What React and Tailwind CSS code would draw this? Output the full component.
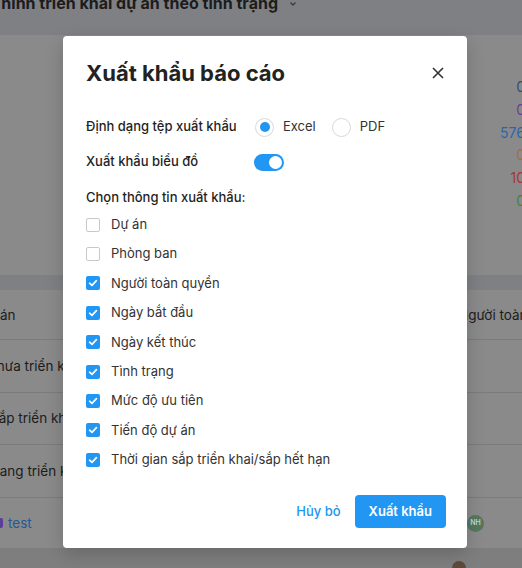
import React, { useState } from 'react'

const fields = [
    { label: 'Dự án', checked: false },
    { label: 'Phòng ban', checked: false },
    { label: 'Người toàn quyền', checked: true },
    { label: 'Ngày bắt đầu', checked: true },
    { label: 'Ngày kết thúc', checked: true },
    { label: 'Tình trạng', checked: true },
    { label: 'Mức độ ưu tiên', checked: true },
    { label: 'Tiến độ dự án', checked: true },
    { label: 'Thời gian sắp triển khai/sắp hết hạn', checked: true },
]

const Checkbox = ({ checked, onClick }) => (
    <button
        type="button"
        onClick={onClick}
        className={checked
            ? 'w-[14px] h-[14px] rounded-[2px] bg-[#2196f3] flex items-center justify-center shrink-0'
            : 'w-[14px] h-[14px] rounded-[2px] bg-white border border-[#c9c9c9] shrink-0'}
    >
        {checked && (
            <svg width="10" height="10" viewBox="0 0 10 10" fill="none">
                <path d="M1.6 5.2L4 7.4L8.4 2.6" stroke="white" strokeWidth="1.7" strokeLinecap="round" strokeLinejoin="round" />
            </svg>
        )}
    </button>
)

const Radio = ({ checked, label, onClick }) => (
    <button type="button" onClick={onClick} className="flex items-center gap-[9px]">
        <span className="w-[19px] h-[19px] rounded-full border border-[#d9d9d9] bg-white flex items-center justify-center">
            {checked && <span className="w-[10px] h-[10px] rounded-full bg-[#2196f3]" />}
        </span>
        <span className="text-[13px] text-[#333]">{label}</span>
    </button>
)

const App = () => {
    const [format, setFormat] = useState('Excel')
    const [chart, setChart] = useState(true)
    const [checks, setChecks] = useState(fields.map(f => f.checked))

    return (
        <div className="relative w-[522px] h-[568px] overflow-hidden bg-[#7f8084] font-['Inter',sans-serif]">
            {/* Dimmed page behind the modal */}
            <div className="flex flex-col">
                <div className="h-[35px] flex items-start">
                    <div className="w-[278px] flex justify-end whitespace-nowrap">
                        <span className="text-[16px] font-bold text-[#1c1c1c] leading-[20px] -mt-[7px]">Tình hình triển khai dự án theo tình trạng</span>
                    </div>
                    <svg className="ml-[10px] -mt-[1px]" width="10" height="10" viewBox="0 0 10 10" fill="none">
                        <path d="M2.5 3.5L5 6L7.5 3.5" stroke="#3a3a3a" strokeWidth="1.3" />
                    </svg>
                </div>

                <div className="h-[240px] bg-[#8a8a8a] flex justify-end pt-[41px] -mr-[3px]">
                    <div className="flex flex-col items-end text-[14px] leading-[22.8px]">
                        <span className="text-[#2f4f80]">0</span>
                        <span className="text-[#6b3f96]">0</span>
                        <span className="text-[#2a66b0]">576</span>
                        <span className="text-[#a0703f]">0</span>
                        <span className="text-[#a23838]">10</span>
                        <span className="text-[#3c873c]">0</span>
                    </div>
                </div>

                <div className="h-[15px]" />

                <div className="bg-[#8a8a8a] text-[13.5px] text-[#1c1c1c]">
                    <div className="h-[49px] flex items-center pt-[1px] whitespace-nowrap">
                        <span className="-ml-[22px]">Dự án</span>
                        <span className="ml-auto w-[64px]">Người toàn quyền</span>
                    </div>
                    <div className="h-[53px] border-t border-[#7b7b7b] flex items-center whitespace-nowrap">
                        <span className="-ml-[13px]">Chưa triển khai</span>
                    </div>
                    <div className="h-[52px] border-t border-[#7b7b7b] flex items-center whitespace-nowrap">
                        <span className="-ml-[10px]">Sắp triển khai</span>
                    </div>
                    <div className="h-[53px] border-t border-[#7b7b7b] flex items-center whitespace-nowrap">
                        <span className="-ml-[10px]">Đang triển khai</span>
                    </div>
                    <div className="h-[51px] border-t border-[#7b7b7b] flex items-center">
                        <span className="w-[10px] h-[10px] rounded-[2px] bg-[#5a3f9a] -ml-[7px]" />
                        <span className="ml-[5px] text-[#245a94]">test</span>
                        <span className="ml-auto mr-[38px] w-[17px] h-[17px] rounded-full bg-[#56775d] text-[7px] font-semibold text-[#c8d4c9] flex items-center justify-center">NH</span>
                    </div>
                </div>

                <div className="h-[20px] bg-[#7e7e7e] flex justify-end">
                    <span className="mt-[13px] mr-[56px] w-[14px] h-[14px] rounded-full bg-[#5e4a3a]" />
                </div>
            </div>

            {/* Export modal */}
            <div className="absolute left-[63px] top-[36px] w-[404px] h-[512px] bg-white rounded-[4px] shadow-[0_6px_18px_rgba(0,0,0,0.18)] flex flex-col pl-[23px] pr-[23px] pt-[24px] pb-[20px]">
                <div className="h-[26px] flex items-center justify-between">
                    <h2 className="text-[22px] font-bold text-[#222] leading-[26px]">Xuất khẩu báo cáo</h2>
                    <button type="button" className="flex items-center justify-center">
                        <svg width="12" height="12" viewBox="0 0 12 12" fill="none">
                            <path d="M1 1L11 11M11 1L1 11" stroke="#333" strokeWidth="1.6" />
                        </svg>
                    </button>
                </div>

                <div className="mt-[31px] h-[20px] flex items-center">
                    <span className="w-[169px] text-[13px] font-medium text-[#1f1f1f]">Định dạng tệp xuất khẩu</span>
                    <div className="flex items-center gap-[16px]">
                        <Radio label="Excel" checked={format === 'Excel'} onClick={() => setFormat('Excel')} />
                        <Radio label="PDF" checked={format === 'PDF'} onClick={() => setFormat('PDF')} />
                    </div>
                </div>

                <div className="mt-[15px] h-[20px] flex items-center">
                    <span className="w-[168px] text-[13px] font-medium text-[#1f1f1f]">Xuất khẩu biểu đồ</span>
                    <button
                        type="button"
                        onClick={() => setChart(!chart)}
                        className={chart
                            ? 'w-[30px] h-[17px] rounded-full bg-[#2196f3] flex items-center justify-end px-[2px]'
                            : 'w-[30px] h-[17px] rounded-full bg-[#bfbfbf] flex items-center justify-start px-[2px]'}
                    >
                        <span className="w-[13px] h-[13px] rounded-full bg-white" />
                    </button>
                </div>

                <div className="mt-[16px] h-[20px] flex items-center text-[13px] font-medium text-[#1f1f1f]">Chọn thông tin xuất khẩu:</div>

                <div className="mt-[2px] flex flex-col">
                    {fields.map((f, i) => (
                        <div key={f.label} className="h-[29.4px] flex items-center gap-[11px]">
                            <Checkbox
                                checked={checks[i]}
                                onClick={() => setChecks(checks.map((c, j) => (j === i ? !c : c)))}
                            />
                            <span className="text-[13px] text-[#333]">{f.label}</span>
                        </div>
                    ))}
                </div>

                <div className="mt-auto -mr-[2px] flex items-center justify-end gap-[14px]">
                    <button type="button" className="text-[13px] font-medium text-[#2196f3]">Hủy bỏ</button>
                    <button type="button" className="h-[33px] px-[14px] rounded-[4px] bg-[#2196f3] text-[13px] font-semibold text-white">Xuất khẩu</button>
                </div>
            </div>
        </div>
    )
}

export default App
